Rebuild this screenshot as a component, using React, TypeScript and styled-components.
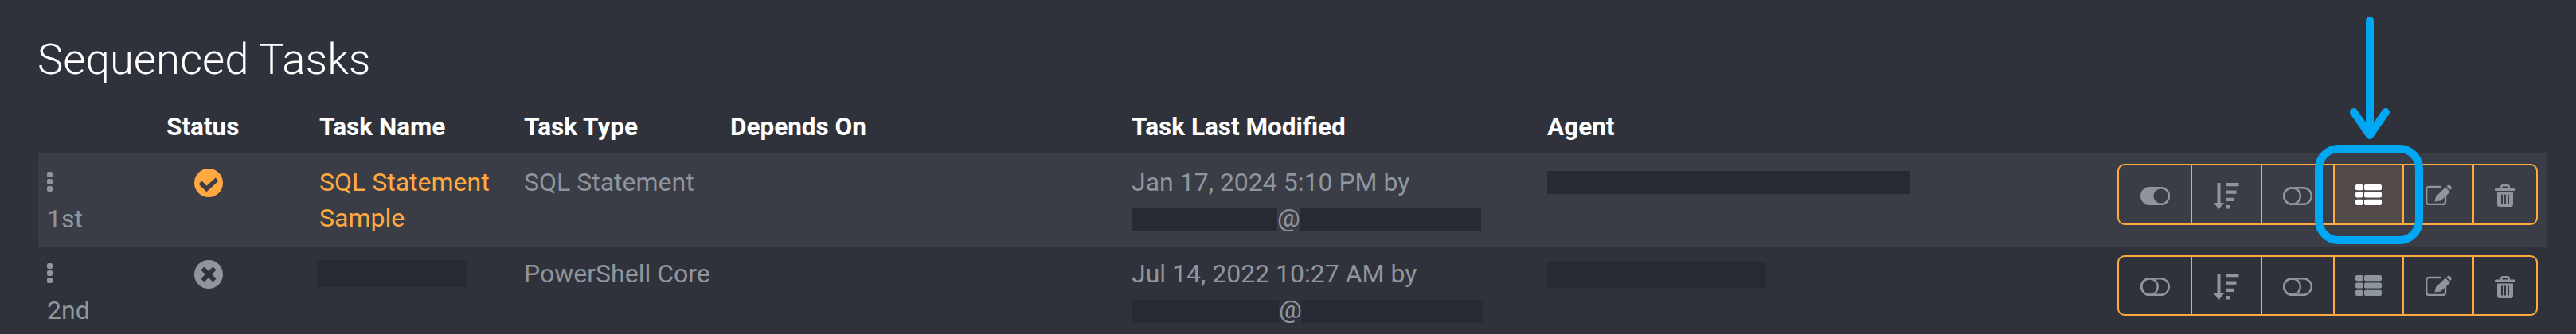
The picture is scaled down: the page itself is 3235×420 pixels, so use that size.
import React from 'react'
import styled, { createGlobalStyle } from 'styled-components'

const colors = {
  page: '#30323b',
  row: '#3a3c46',
  text: '#8f959d',
  orange: '#ffa940',
  redact: '#272a32',
  active: '#524a49',
  blue: '#00a8f3',
}

const GlobalStyle = createGlobalStyle`
  html, body {
    margin: 0;
    background: ${colors.page};
  }
  body {
    font-family: Roboto, "Liberation Sans", sans-serif;
  }
`

const Page = styled.div`
  position: relative;
  width: 3235px;
  height: 420px;
  overflow: hidden;
  box-sizing: border-box;
  padding: 44px 36px 0 48px;
  background: ${colors.page};
`

const Title = styled.h2`
  margin: 1px 0 -1px -1px;
  font-size: 54.5px;
  line-height: 58px;
  font-weight: 300;
  color: #fff;
`

const columns = '161px 192px 257px 259px 504px 522px 1fr auto'

const HeaderRow = styled.div`
  display: grid;
  grid-template-columns: ${columns};
  height: 90px;
  box-sizing: border-box;
  align-items: end;
  padding-bottom: 14px;
`

const HeaderCell = styled.div`
  font-size: 31.5px;
  line-height: 36px;
  font-weight: 700;
  color: #fff;
`

const TaskRow = styled.div<{ $striped?: boolean }>`
  display: grid;
  grid-template-columns: ${columns};
  align-items: start;
  height: ${(p) => (p.$striped ? '118px' : '110px')};
  box-sizing: border-box;
  padding: ${(p) => (p.$striped ? '14px' : '11px')} 12px 0 0;
  background: ${(p) => (p.$striped ? colors.row : 'transparent')};
`

const Cell = styled.div<{ $accent?: boolean }>`
  padding-top: 1px;
  font-size: 32px;
  line-height: 45px;
  color: ${(p) => (p.$accent ? colors.orange : colors.text)};
`

const SeqCell = styled(Cell)`
  padding: 0 0 0 11px;
`

const Handle = styled.svg`
  display: block;
  width: 7px;
  height: 25px;
  margin: 10px 0 12px;
  fill: ${colors.text};
`

const SeqLabel = styled.div`
  line-height: 45px;
`

const StatusCell = styled.div`
  padding: 6px 0 0 35px;
  line-height: 0;
`

const Redacted = styled.span<{ $w: number; $h?: number }>`
  display: inline-block;
  width: ${(p) => p.$w}px;
  height: ${(p) => p.$h ?? 29}px;
  background: ${colors.redact};
  vertical-align: middle;
`

const NameBar = styled(Redacted)`
  display: block;
  margin: 5px 0 0 -3px;
`

const AgentBar = styled(Redacted)`
  display: block;
  margin-top: 8px;
`

const ActionGroup = styled.div<{ $h: number }>`
  display: flex;
  height: ${(p) => p.$h}px;
  box-sizing: border-box;
  border: 2px solid ${colors.orange};
  border-radius: 9px;
  overflow: hidden;
`

const ActionButton = styled.div<{ $w: number; $active?: boolean; $low?: boolean }>`
  display: flex;
  align-items: center;
  justify-content: center;
  width: ${(p) => p.$w}px;
  box-sizing: border-box;
  padding-top: ${(p) => (p.$low ? '3px' : '0')};
  color: ${(p) => (p.$active ? '#fff' : colors.text)};
  background: ${(p) => (p.$active ? colors.active : 'transparent')};

  & + & {
    border-left: 2px solid ${colors.orange};
  }
`

const Highlight = styled.div`
  position: absolute;
  left: 2907px;
  top: 182px;
  width: 136px;
  height: 125px;
  box-sizing: border-box;
  border: 10px solid ${colors.blue};
  border-radius: 30px;
`

const Arrow = styled.svg`
  position: absolute;
  left: 2950px;
  top: 20px;
  width: 52px;
  height: 156px;
  fill: none;
  stroke: ${colors.blue};
  stroke-width: 10;
  stroke-linecap: round;
  stroke-linejoin: round;
`

const DragHandle = () => (
  <Handle viewBox="0 0 7 25">
    <rect y="0" width="7" height="7" rx="2" />
    <rect y="9" width="7" height="7" rx="2" />
    <rect y="18" width="7" height="7" rx="2" />
  </Handle>
)

const StatusIcon = ({ ok, bg }: { ok?: boolean; bg: string }) => (
  <svg width="36" height="36" viewBox="0 0 36 36">
    <circle cx="18" cy="18" r="18" fill={ok ? colors.orange : colors.text} />
    {ok ? (
      <path d="M7.500 17.500L15.500 25.500L28.500 13.500" fill="none" stroke={bg} strokeWidth="5.500" />
    ) : (
      <path d="M10.500 10.500L25.500 25.500M25.500 10.500L10.500 25.500" fill="none" stroke={bg} strokeWidth="6" />
    )}
  </svg>
)

const ToggleIcon = ({ on, bg }: { on?: boolean; bg: string }) => (
  <svg width="37" height="23" viewBox="0 0 37 23" style={{ display: 'block' }}>
    <rect x="1.2" y="1.2" width="34.6" height="20.6" rx="10.3" fill={on ? 'currentColor' : 'none'} stroke="currentColor" strokeWidth="2.4" />
    <circle cx={on ? 25.5 : 11.5} cy="11.5" r="10.3" fill={on ? bg : 'none'} stroke="currentColor" strokeWidth="2.4" />
  </svg>
)

const SortIcon = () => (
  <svg width="32" height="33" viewBox="0 0 32 33" fill="currentColor" style={{ display: 'block' }}>
    <rect x="4.5" y="0" width="4" height="26" />
    <path d="M0 25h13l-6.500 8z" />
    <rect x="15.500" y="0" width="16" height="4.300" />
    <rect x="15.500" y="9.500" width="13" height="4.300" />
    <rect x="15.500" y="18.700" width="9.500" height="4.300" />
    <rect x="15.500" y="28" width="5.500" height="4.500" />
  </svg>
)

const ListIcon = () => (
  <svg width="33" height="26" viewBox="0 0 33 26" fill="currentColor" style={{ display: 'block' }}>
    {[0, 9.4, 18.8].map((y) => (
      <g key={y}>
        <rect x="0" y={y} width="9.500" height="7.200" rx="2" />
        <rect x="11" y={y} width="22" height="7.200" rx="2" />
      </g>
    ))}
  </svg>
)

const EditIcon = () => (
  <svg width="33" height="26" viewBox="0 0 33 26" style={{ display: 'block' }}>
    <path d="M25 14v8a3 3 0 0 1-3 3H4.200a3 3 0 0 1-3-3V6a3 3 0 0 1 3-3H20" fill="none" stroke="currentColor" strokeWidth="2.4" />
    <path d="M11.500 21.500L13 15 25 3.500l6 6-12 11z M26.500 2.500l2-1.700q.8-.6 1.600 0l2.500 2.500q.6.8 0 1.600L31 7z" fill="currentColor" />
  </svg>
)

const TrashIcon = () => (
  <svg width="26" height="28" viewBox="0 0 26 28" fill="currentColor" style={{ display: 'block' }}>
    <path fillRule="evenodd" d="M0 6q0-1.500 1.500-1.500H7V3a3 3 0 0 1 3-3h6a3 3 0 0 1 3 3v1.500h5.500q1.500 0 1.500 1.500v1q0 1-1 1H1q-1 0-1-1z M9.500 4.500h7V2.500h-7z" />
    <path fillRule="evenodd" d="M3 9.500h20V25a3 3 0 0 1-3 3H6a3 3 0 0 1-3-3z M8 12.500v12h2v-12z M12 12.500v12h2v-12z M16 12.500v12h2v-12z" />
  </svg>
)

const widths = [90, 88, 91, 87, 88, 80]

const Actions = ({ toggled, active, bg, height }: { toggled?: boolean; active?: boolean; bg: string; height: number }) => (
  <ActionGroup $h={height}>
    <ActionButton $w={widths[0]} $low><ToggleIcon on={toggled} bg={bg} /></ActionButton>
    <ActionButton $w={widths[1]} $low><SortIcon /></ActionButton>
    <ActionButton $w={widths[2]} $low><ToggleIcon bg={bg} /></ActionButton>
    <ActionButton $w={widths[3]} $active={active}><ListIcon /></ActionButton>
    <ActionButton $w={widths[4]}><EditIcon /></ActionButton>
    <ActionButton $w={widths[5]} $low><TrashIcon /></ActionButton>
  </ActionGroup>
)

const App = () => (
  <Page>
    <GlobalStyle />
    <Title>Sequenced Tasks</Title>
    <HeaderRow>
      <HeaderCell />
      <HeaderCell>Status</HeaderCell>
      <HeaderCell>Task Name</HeaderCell>
      <HeaderCell>Task Type</HeaderCell>
      <HeaderCell>Depends On</HeaderCell>
      <HeaderCell>Task Last Modified</HeaderCell>
      <HeaderCell>Agent</HeaderCell>
      <HeaderCell />
    </HeaderRow>

    <TaskRow $striped>
      <SeqCell>
        <DragHandle />
        <SeqLabel>1st</SeqLabel>
      </SeqCell>
      <StatusCell><StatusIcon ok bg={colors.row} /></StatusCell>
      <Cell $accent>SQL Statement<br />Sample</Cell>
      <Cell>SQL Statement</Cell>
      <Cell />
      <Cell>
        Jan 17, 2024 5:10 PM by<br />
        <Redacted $w={183} />@<Redacted $w={227} />
      </Cell>
      <Cell><AgentBar $w={455} /></Cell>
      <Actions toggled active bg={colors.row} height={77} />
    </TaskRow>

    <TaskRow>
      <SeqCell>
        <DragHandle />
        <SeqLabel>2nd</SeqLabel>
      </SeqCell>
      <StatusCell><StatusIcon bg={colors.page} /></StatusCell>
      <Cell><NameBar $w={188} $h={34} /></Cell>
      <Cell>PowerShell Core</Cell>
      <Cell />
      <Cell>
        Jul 14, 2022 10:27 AM by<br />
        <Redacted $w={185} />@<Redacted $w={227} />
      </Cell>
      <Cell><AgentBar $w={275} $h={32} /></Cell>
      <Actions bg={colors.page} height={76} />
    </TaskRow>

    <Arrow viewBox="0 0 52 156">
      <path d="M26 6V148" />
      <path d="M6 121L26 150L46 121" />
    </Arrow>
    <Highlight />
  </Page>
)

export default App
